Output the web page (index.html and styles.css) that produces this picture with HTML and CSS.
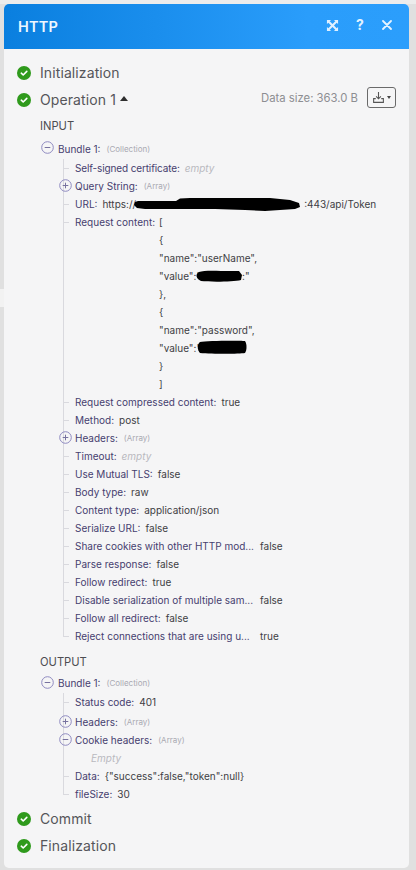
FILE: index.html
```html
<!DOCTYPE html>
<html lang="en">
<head>
<meta charset="utf-8">
<title>HTTP</title>
<link rel="stylesheet" href="styles.css">
</head>
<body>
<svg width="0" height="0" class="defs">
  <symbol id="ok" viewBox="0 0 14 14"><circle cx="7" cy="7" r="7" fill="#2f9a1c"/><path d="M4.3 7.2l1.9 1.8 3.6-3.6" fill="none" stroke="#fff" stroke-width="1.6" stroke-linecap="round" stroke-linejoin="round"/></symbol>
  <symbol id="plus" viewBox="0 0 13 13"><circle cx="6.5" cy="6.5" r="5.8" fill="none" stroke="#8f8ac0" stroke-width="1"/><path d="M3.7 6.5h5.6M6.5 3.7v5.6" stroke="#77729f" stroke-width="1"/></symbol>
  <symbol id="minus" viewBox="0 0 13 13"><circle cx="6.5" cy="6.5" r="5.8" fill="none" stroke="#8f8ac0" stroke-width="1"/><path d="M3.7 6.5h5.6" stroke="#77729f" stroke-width="1"/></symbol>
</svg>
<i class="notch"></i>
<main class="modal">
  <header class="head">
    <h1>HTTP</h1>
    <div class="tools">
      <svg class="tool" viewBox="0 0 14 14"><path d="M1 1h4.500L4 2.500 7 5.400 10 2.500 8.500 1H13v4.500L11.500 4 8.600 7l2.900 3L13 8.500V13H8.500L10 11.500 7 8.600 4 11.500 5.500 13H1V8.500L2.500 10 5.400 7 2.500 4 1 5.500z" fill="#dff0ff"/></svg>
      <span class="q">?</span>
      <svg class="tool x" viewBox="0 0 10 10"><path d="M1 1l8 8M9 1l-8 8" stroke="#e6f3ff" stroke-width="1.800" stroke-linecap="round"/></svg>
    </div>
  </header>
  <section class="body">
    <div class="stage first"><svg class="ok"><use href="#ok"/></svg><span>Initialization</span></div>
    <div class="stage op">
      <svg class="ok"><use href="#ok"/></svg><span>Operation 1</span><i class="caret"></i>
      <span class="size">Data size: 363.0 B</span>
      <span class="dl"><svg viewBox="0 0 12 12" width="13" height="13"><path d="M6 1v6M3.800 5L6 7.200 8.200 5M3.500 7H1.500v3.500h9V7H8.500" fill="none" stroke="#555" stroke-width="1"/></svg><i class="mini"></i></span>
    </div>

    <div class="sec input">INPUT</div>
    <div class="row b1"><svg class="tg"><use href="#minus"/></svg><b>Bundle 1:</b><em>(Collection)</em></div>
    <div class="tree">
      <div class="row"><b class="snug">Self-signed certificate:</b><u>empty</u></div>
      <div class="row"><svg class="tg"><use href="#plus"/></svg><b>Query String:</b><em>(Array)</em></div>
      <div class="row"><b>URL:</b><span class="tight"><span>https://</span><i class="gap-url"></i><span>:443/api/Token</span></span></div>
      <div class="row multi"><b>Request content:</b>
        <div class="code">
          <div>[</div><div>{</div><div>"name":"userName",</div><div>"value":"<i class="gap-v1"></i>:"</div><div>},</div><div>{</div><div>"name":"password",</div><div>"value":"</div><div>}</div><div>]</div>
        </div>
      </div>
      <div class="row"><b>Request compressed content:</b><span>true</span></div>
      <div class="row"><b>Method:</b><span>post</span></div>
      <div class="row"><svg class="tg"><use href="#plus"/></svg><b>Headers:</b><em>(Array)</em></div>
      <div class="row"><b>Timeout:</b><u>empty</u></div>
      <div class="row"><b>Use Mutual TLS:</b><span>false</span></div>
      <div class="row"><b>Body type:</b><span>raw</span></div>
      <div class="row"><b>Content type:</b><span>application/json</span></div>
      <div class="row"><b>Serialize URL:</b><span>false</span></div>
      <div class="row"><b class="cut">Share cookies with other HTTP mod...</b><span>false</span></div>
      <div class="row"><b>Parse response:</b><span>false</span></div>
      <div class="row"><b>Follow redirect:</b><span>true</span></div>
      <div class="row"><b class="cut">Disable serialization of multiple sam...</b><span>false</span></div>
      <div class="row"><b>Follow all redirect:</b><span>false</span></div>
      <div class="row"><b class="cut">Reject connections that are using u...</b><span>true</span></div>
    </div>

    <div class="sec output">OUTPUT</div>
    <div class="row b1 b2"><svg class="tg"><use href="#minus"/></svg><b>Bundle 1:</b><em>(Collection)</em></div>
    <div class="tree">
      <div class="row"><b>Status code:</b><span>401</span></div>
      <div class="row nudge"><svg class="tg"><use href="#plus"/></svg><b>Headers:</b><em>(Array)</em></div>
      <div class="row"><svg class="tg"><use href="#minus"/></svg><b>Cookie headers:</b><em>(Array)</em></div>
      <div class="row blank"><u>Empty</u></div>
      <div class="row"><b>Data:</b><span>{"success":false,"token":null}</span></div>
      <div class="row"><b>fileSize:</b><span>30</span></div>
    </div>

    <div class="stage commit"><svg class="ok"><use href="#ok"/></svg><span>Commit</span></div>
    <div class="stage"><svg class="ok"><use href="#ok"/></svg><span>Finalization</span></div>
  </section>
  <svg class="ink" viewBox="4 4 405 866" width="405" height="866">
    <path d="M138 201h38l4-2.500 10-.5h80l20 2 9 3 1 4-5 2-15 1-15 1-20-1-30-1-70 0-8-1-3-3 1-3z" fill="#000"/>
    <path d="M199 272c4-1.500 14-1.500 22-1h18l3 4-1 5c-8 2-32 2-40 1-5-2-6-7-2-9z" fill="#000"/>
    <path d="M200 342c6-1.500 40-1.500 45-1 2 3 2 9 0 12-6 1-32 1-45 0-3-3-3-9 0-11z" fill="#000"/>
  </svg>
</main>
</body>
</html>
```
FILE: styles.css
```css
html, body { margin: 0; height: 100%; }
body {
  width: 416px;
  height: 870px;
  overflow: hidden;
  background: linear-gradient(180deg, #ececec 0, #ececec 4px, #e0e0e0 4px);
  font-family: Inter, "Liberation Sans", sans-serif;
  box-sizing: border-box;
  padding: 4px 7px 0 4px;
}
.defs { position: absolute; }
.notch { position: absolute; left: 0; top: 289px; width: 4px; height: 18px; background: #f2f2f2; }
.modal {
  position: relative;
  width: 405px;
  height: 864px;
  background: #f5f5f6;
  border-radius: 5px;
  overflow: hidden;
}
.head {
  height: 45px;
  box-sizing: border-box;
  padding: 0 17px 0 14px;
  display: flex;
  align-items: center;
  justify-content: space-between;
  background: linear-gradient(90deg, #0a7fdf 0%, #2a9dfb 75%, #2b9efc 100%);
  color: #eef7ff;
}
.head h1 { margin: -1px 0 0; font-size: 14.5px; font-weight: 600; letter-spacing: .2px; }
.tools { display: flex; align-items: center; gap: 16px; margin-top: -3px; }
.tool { width: 13px; height: 13px; display: block; }
.tool.x { width: 10px; height: 10px; margin-left: 1px; }
.q { font-size: 14px; font-weight: 700; line-height: 14px; color: #e6f3ff; width: 10px; text-align: center; }
.body { padding: 0 0 0 13px; font-size: 10px; color: #3e3e44; }
.stage {
  display: flex;
  align-items: center;
  height: 27px;
  font-size: 14px;
  letter-spacing: .1px;
  color: #55565a;
}
.stage.first { margin-top: 10px; }
.ok { width: 14px; height: 14px; margin-right: 9px; flex: none; }
.op { position: relative; }
.caret {
  width: 0; height: 0; margin-left: 4px; margin-top: -3px;
  border: 4px solid transparent; border-top: 0; border-bottom: 5px solid #2e2e2e;
}
.size { position: absolute; left: 244px; top: 5px; font-size: 11.300px; letter-spacing: 0; color: #8d8e92; }
.dl {
  position: absolute; left: 350px; top: 1px; width: 29px; height: 21px;
  box-sizing: border-box; border: 1px solid #6a6a6a; border-radius: 3px;
  display: flex; align-items: center; padding-left: 4px; gap: 2px;
}
.mini { width: 0; height: 0; border: 2.500px solid transparent; border-bottom: 0; border-top: 3px solid #444; }
.sec { font-size: 11.200px; color: #4d4d52; margin-left: 23px; line-height: 18px; }
.sec.input { margin-top: 4px; }
.sec.output { margin-top: 8px; }
.row {
  display: flex;
  align-items: center;
  gap: 5px;
  min-height: 18px;
  line-height: 18px;
  position: relative;
  white-space: nowrap;
}
.row b { font-weight: 400; color: #46406f; }
.row b.snug { letter-spacing: -.13px; }
.row span { color: #3e3e44; }
.row em { font-size: 8px; color: #a9a9b2; font-style: normal; margin-left: 1px; }
.row u { text-decoration: none; font-style: italic; color: #b9b9bf; }
.row.b1 { padding-left: 41px; height: 21px; margin-top: 3px; }
.row.b2 { height: 20px; margin-top: 2px; }
.tg { width: 13px; height: 13px; position: absolute; left: -16px; top: 2px; }
.row.b1 .tg { left: 24px; top: 3px; }
.tree { margin-left: 42px; padding-left: 16px; position: relative; }
.tree::before { content: ""; position: absolute; left: 4px; top: 0; bottom: 9px; width: 1px; background: #d9d9de; }
.tree .row::before { content: ""; position: absolute; left: -12px; top: 9px; width: 6px; height: 1px; background: #d9d9de; }
.tree .row:has(.tg)::before { display: none; }
.tree .row.blank::before { display: none; }
.nudge { margin-top: 2px; }
.tight { display: flex; align-items: center; }
.gap-url { display: block; width: 168px; height: 1px; }
.gap-v1 { display: inline-block; width: 41px; height: 1px; }
.multi { align-items: flex-start; height: 180px; }
.code { position: absolute; left: 84px; top: 0; color: #3e3e44; }
.code div { height: 18px; line-height: 18px; }
.cut { width: 180px; overflow: hidden; }
.blank { padding-left: 16px; }
.commit { margin-top: 2px; }
.ink { position: absolute; left: 0; top: 0; pointer-events: none; }
```
